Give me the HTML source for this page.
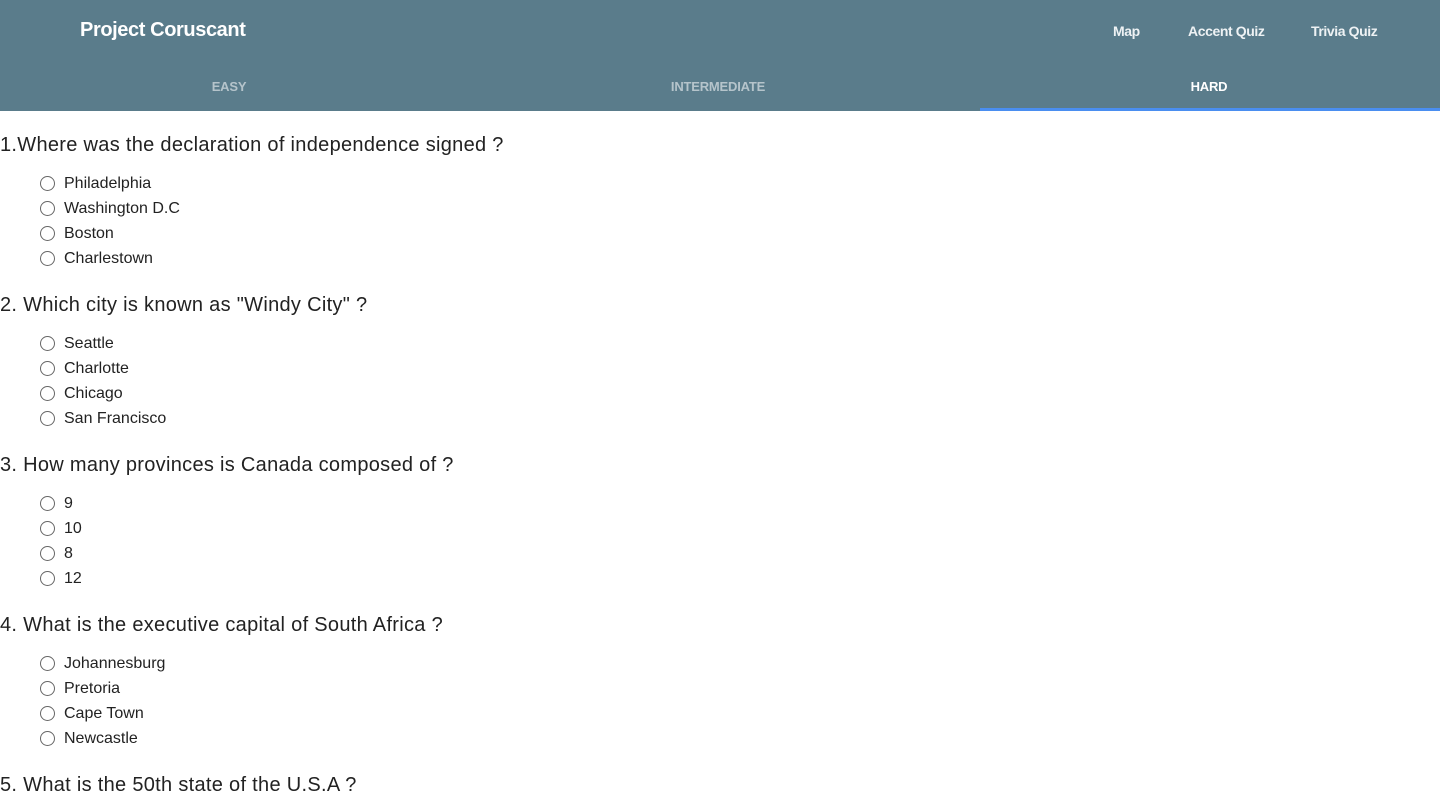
<!DOCTYPE html>
<html><head><style>
body{margin:0;font-family:"Liberation Sans",sans-serif;background:#fff;color:#222;}
.hdr{background:#5a7c8b;height:111px;position:relative;}
.title{position:absolute;left:80px;top:19px;font-size:20px;color:#fff;font-weight:bold;letter-spacing:-0.4px}
.nav{position:absolute;top:23px;font-size:14px;color:#eef2f4;font-weight:bold;letter-spacing:-0.4px}
.tab{position:absolute;top:79px;font-size:13px;font-weight:bold;width:480px;text-align:center;color:#b5c4cb;letter-spacing:-0.2px}
.ul{position:absolute;left:980px;top:108px;width:460px;height:3px;background:#4a8ef0}
.q{font-size:20px;margin:0;position:absolute;left:0;letter-spacing:0.3px}
.o{position:absolute;left:40px;font-size:16px;height:20px;line-height:20px}
.o:before{content:"";position:absolute;left:0;top:2px;width:13px;height:13px;border:1.5px solid #666;border-radius:50%}
.o span{margin-left:24px}
</style></head><body>
<div class="hdr">
<div class="title">Project Coruscant</div>
<div class="nav" style="left:1113px">Map</div>
<div class="nav" style="left:1188px">Accent Quiz</div>
<div class="nav" style="left:1311px">Trivia Quiz</div>
<div class="tab" style="left:-11px">EASY</div>
<div class="tab" style="left:478px">INTERMEDIATE</div>
<div class="tab" style="left:969px;color:#fff">HARD</div>
<div class="ul"></div>
</div>
<div class="q" style="top:134px">1.Where was the declaration of independence signed ?</div>
<div class="o" style="top:174px"><span>Philadelphia</span></div>
<div class="o" style="top:199px"><span>Washington D.C</span></div>
<div class="o" style="top:224px"><span>Boston</span></div>
<div class="o" style="top:249px"><span>Charlestown</span></div>
<div class="q" style="top:294px">2. Which city is known as "Windy City" ?</div>
<div class="o" style="top:334px"><span>Seattle</span></div>
<div class="o" style="top:359px"><span>Charlotte</span></div>
<div class="o" style="top:384px"><span>Chicago</span></div>
<div class="o" style="top:409px"><span>San Francisco</span></div>
<div class="q" style="top:454px">3. How many provinces is Canada composed of ?</div>
<div class="o" style="top:494px"><span>9</span></div>
<div class="o" style="top:519px"><span>10</span></div>
<div class="o" style="top:544px"><span>8</span></div>
<div class="o" style="top:569px"><span>12</span></div>
<div class="q" style="top:614px">4. What is the executive capital of South Africa ?</div>
<div class="o" style="top:654px"><span>Johannesburg</span></div>
<div class="o" style="top:679px"><span>Pretoria</span></div>
<div class="o" style="top:704px"><span>Cape Town</span></div>
<div class="o" style="top:729px"><span>Newcastle</span></div>
<div class="q" style="top:774px">5. What is the 50th state of the U.S.A ?</div>
</body></html>
